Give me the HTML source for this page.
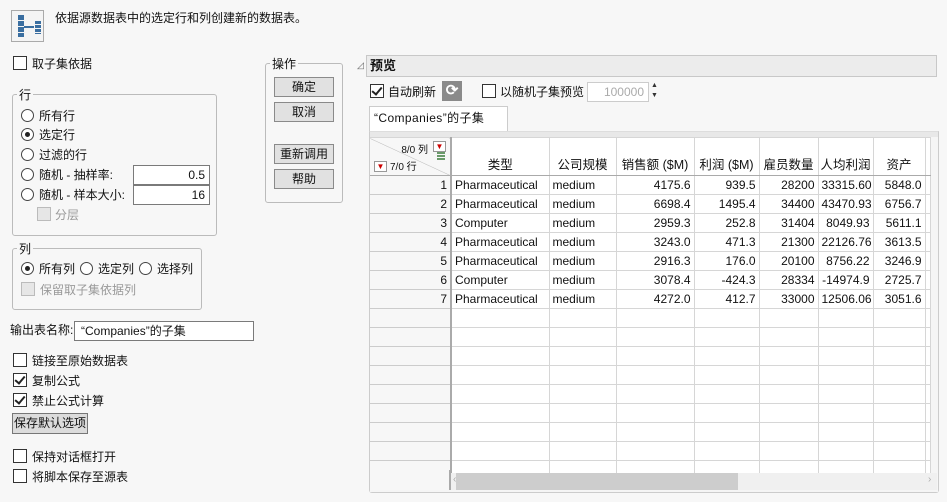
<!DOCTYPE html>
<html><head><meta charset="utf-8">
<style>
*{box-sizing:border-box;margin:0;padding:0}
body{width:947px;height:502px;background:#f7f7f7;font-family:"Liberation Sans","Noto Sans CJK SC",sans-serif;font-size:12px;color:#111;position:relative;overflow:hidden}
.a{position:absolute;white-space:nowrap}
.cb{position:absolute;width:14px;height:14px;border:1px solid #333;background:#fff}
.cb.on::after{content:"";position:absolute;left:3px;top:0px;width:4px;height:8px;border:solid #222;border-width:0 2px 2px 0;transform:rotate(40deg)}
.cb.dis{border-color:#bbb;background:#e6e6e6}
.rd{position:absolute;width:13px;height:13px;border:1px solid #444;border-radius:50%;background:#fff}
.rd.on::after{content:"";position:absolute;left:3px;top:3px;width:5px;height:5px;border-radius:50%;background:#222}
.grp{position:absolute;border:1px solid #bbb;border-radius:3px}
.lg{position:absolute;background:#f7f7f7;padding:0 2px;top:-9px;left:4px;font-size:12px}
.btn{position:absolute;width:60px;height:20px;border:1px solid #8a8a8a;background:#e1e1e1;text-align:center;line-height:18px}
.inp{position:absolute;border:1px solid #7a7a7a;background:#fff;height:20px;line-height:18px}
table{border-collapse:collapse;position:absolute;left:370px;top:137px;table-layout:fixed;width:560px;background:#fff}
td{height:19px;border:1px solid #d6d6d6;padding:0 3px;font-size:12px;overflow:hidden;white-space:nowrap}
td.r{text-align:right}
td.rh{background:#f7f7f7;border-right:2px solid #aaa;border-left:none;text-align:right;border-bottom:1px solid #ccc}
tr.h td{height:38px;vertical-align:bottom;text-align:center;padding:0 0 2px 0;border-bottom:1px solid #aaa;font-size:12.5px}
</style></head><body>
<div class="a" style="left:11px;top:10px;width:33px;height:32px;border:1px solid #aaa;background:#f4f4f4">
<div class="a" style="left:6px;top:4px;width:6px;height:22px;background:repeating-linear-gradient(#3a6ea0 0 5px,#f4f4f4 5px 6px)"></div>
<div class="a" style="left:12px;top:15px;width:10px;height:2px;background:#3a6ea0"></div>
<div class="a" style="left:23px;top:10px;width:6px;height:13px;background:repeating-linear-gradient(#3a6ea0 0 3px,#f4f4f4 3px 4px)"></div>
</div>
<div class="a" style="left:55px;top:9px">依据源数据表中的选定行和列创建新的数据表。</div>

<div class="cb" style="left:13px;top:56px"></div><div class="a" style="left:32px;top:55px">取子集依据</div>

<div class="grp" style="left:12px;top:94px;width:205px;height:142px"><span class="lg">行</span></div>
<div class="rd" style="left:21px;top:109px"></div><div class="a" style="left:39px;top:107px">所有行</div>
<div class="rd on" style="left:21px;top:128px"></div><div class="a" style="left:39px;top:126px">选定行</div>
<div class="rd" style="left:21px;top:148px"></div><div class="a" style="left:39px;top:146px">过滤的行</div>
<div class="rd" style="left:21px;top:168px"></div><div class="a" style="left:39px;top:166px">随机 - 抽样率:</div>
<div class="inp" style="left:133px;top:165px;width:77px;text-align:right;padding-right:4px">0.5</div>
<div class="rd" style="left:21px;top:188px"></div><div class="a" style="left:39px;top:186px">随机 - 样本大小:</div>
<div class="inp" style="left:133px;top:185px;width:77px;text-align:right;padding-right:4px">16</div>
<div class="cb dis" style="left:37px;top:207px"></div><div class="a" style="left:55px;top:206px;color:#999">分层</div>

<div class="grp" style="left:265px;top:63px;width:78px;height:140px"><span class="lg">操作</span></div>
<div class="btn" style="left:274px;top:77px">确定</div>
<div class="btn" style="left:274px;top:102px">取消</div>
<div class="btn" style="left:274px;top:144px">重新调用</div>
<div class="btn" style="left:274px;top:169px">帮助</div>

<div class="grp" style="left:12px;top:248px;width:190px;height:62px"><span class="lg">列</span></div>
<div class="rd on" style="left:21px;top:262px"></div><div class="a" style="left:39px;top:260px">所有列</div>
<div class="rd" style="left:80px;top:262px"></div><div class="a" style="left:98px;top:260px">选定列</div>
<div class="rd" style="left:139px;top:262px"></div><div class="a" style="left:157px;top:260px">选择列</div>
<div class="cb dis" style="left:21px;top:282px"></div><div class="a" style="left:40px;top:281px;color:#999">保留取子集依据列</div>

<div class="a" style="left:10px;top:321px">输出表名称:</div>
<div class="inp" style="left:74px;top:321px;width:180px;padding-left:6px">“Companies”的子集</div>

<div class="cb" style="left:13px;top:353px"></div><div class="a" style="left:32px;top:352px">链接至原始数据表</div>
<div class="cb on" style="left:13px;top:373px"></div><div class="a" style="left:32px;top:372px">复制公式</div>
<div class="cb on" style="left:13px;top:393px"></div><div class="a" style="left:32px;top:392px">禁止公式计算</div>
<div class="a" style="left:12px;top:413px;width:76px;height:21px;border:1px solid #777;background:#dcdcdc;line-height:19px;padding-left:1px">保存默认选项</div>
<div class="cb" style="left:13px;top:449px"></div><div class="a" style="left:32px;top:448px">保持对话框打开</div>
<div class="cb" style="left:13px;top:469px"></div><div class="a" style="left:32px;top:468px">将脚本保存至源表</div>

<div class="a" style="left:357px;top:60px;font-size:9px;color:#666">◿</div>
<div class="a" style="left:366px;top:55px;width:571px;height:22px;border:1px solid #c8c8c8;background:#ececec;font-weight:bold;font-size:13px;line-height:20px;padding-left:3px">预览</div>
<div class="cb on" style="left:370px;top:84px"></div><div class="a" style="left:388px;top:83px">自动刷新</div>
<div class="a" style="left:442px;top:81px;width:20px;height:20px;background:#8a8a8a;color:#fff;text-align:center;line-height:20px;font-size:15px;font-weight:bold">⟳</div>
<div class="cb" style="left:482px;top:84px"></div><div class="a" style="left:500px;top:83px">以随机子集预览</div>
<div class="inp" style="left:587px;top:82px;width:62px;border-color:#ccc;color:#aaa;text-align:right;padding-right:4px">100000</div>
<div class="a" style="left:651px;top:81px;font-size:7px;line-height:10px;color:#333">▲<br>▼</div>

<div class="a" style="left:369px;top:106px;width:139px;height:26px;border:1px solid #ccc;border-bottom:none;background:#fff;line-height:22px;padding-left:4px;letter-spacing:0.4px">“Companies”的子集</div>
<div class="a" style="left:369px;top:131px;width:570px;height:362px;border:1px solid #ccc;border-top:1px solid #ddd;border-radius:0 0 3px 3px;background:#f5f5f5"></div>
<div class="a" style="left:370px;top:132px;width:568px;height:5px;background:#e8e8e8"></div>

<table>
<colgroup><col style="width:81px"><col style="width:98px"><col style="width:67px"><col style="width:78px"><col style="width:65px"><col style="width:59px"><col style="width:55px"><col style="width:52px"><col style="width:5px"></colgroup>
<tr class="h"><td class="rh" style="position:relative;background:linear-gradient(to top right,#f7f7f7 49.5%,#bbb 50%,#f7f7f7 51%)">
<span class="a" style="right:22px;top:3px;font-size:10px">8/0 列</span>
<span class="a" style="right:4px;top:3px;width:13px;height:11px;border:1px solid #999;background:#fff;color:#c00;font-size:8px;line-height:9px;text-align:center">▼</span>
<span class="a" style="right:5px;top:14px;width:8px;height:9px;background:repeating-linear-gradient(#6a9a6a 0 2px,transparent 2px 3px)"></span>
<span class="a" style="left:4px;bottom:3px;width:13px;height:11px;border:1px solid #999;background:#fff;color:#c00;font-size:8px;line-height:9px;text-align:center">▼</span>
<span class="a" style="left:20px;bottom:2px;font-size:10px">7/0 行</span></td>
<td>类型</td><td>公司规模</td><td>销售额 ($M)</td><td>利润 ($M)</td><td>雇员数量</td><td>人均利润</td><td>资产</td><td></td></tr>
<tr><td class="rh">1</td><td>Pharmaceutical</td><td>medium</td><td class="r">4175.6</td><td class="r">939.5</td><td class="r">28200</td><td class="r">33315.60</td><td class="r">5848.0</td><td></td></tr>
<tr><td class="rh">2</td><td>Pharmaceutical</td><td>medium</td><td class="r">6698.4</td><td class="r">1495.4</td><td class="r">34400</td><td class="r">43470.93</td><td class="r">6756.7</td><td></td></tr>
<tr><td class="rh">3</td><td>Computer</td><td>medium</td><td class="r">2959.3</td><td class="r">252.8</td><td class="r">31404</td><td class="r">8049.93</td><td class="r">5611.1</td><td></td></tr>
<tr><td class="rh">4</td><td>Pharmaceutical</td><td>medium</td><td class="r">3243.0</td><td class="r">471.3</td><td class="r">21300</td><td class="r">22126.76</td><td class="r">3613.5</td><td></td></tr>
<tr><td class="rh">5</td><td>Pharmaceutical</td><td>medium</td><td class="r">2916.3</td><td class="r">176.0</td><td class="r">20100</td><td class="r">8756.22</td><td class="r">3246.9</td><td></td></tr>
<tr><td class="rh">6</td><td>Computer</td><td>medium</td><td class="r">3078.4</td><td class="r">-424.3</td><td class="r">28334</td><td class="r">-14974.9</td><td class="r">2725.7</td><td></td></tr>
<tr><td class="rh">7</td><td>Pharmaceutical</td><td>medium</td><td class="r">4272.0</td><td class="r">412.7</td><td class="r">33000</td><td class="r">12506.06</td><td class="r">3051.6</td><td></td></tr>
<tr><td class="rh"></td><td></td><td></td><td></td><td></td><td></td><td></td><td></td><td></td></tr>
<tr><td class="rh"></td><td></td><td></td><td></td><td></td><td></td><td></td><td></td><td></td></tr>
<tr><td class="rh"></td><td></td><td></td><td></td><td></td><td></td><td></td><td></td><td></td></tr>
<tr><td class="rh"></td><td></td><td></td><td></td><td></td><td></td><td></td><td></td><td></td></tr>
<tr><td class="rh"></td><td></td><td></td><td></td><td></td><td></td><td></td><td></td><td></td></tr>
<tr><td class="rh"></td><td></td><td></td><td></td><td></td><td></td><td></td><td></td><td></td></tr>
<tr><td class="rh"></td><td></td><td></td><td></td><td></td><td></td><td></td><td></td><td></td></tr>
<tr><td class="rh"></td><td></td><td></td><td></td><td></td><td></td><td></td><td></td><td></td></tr>
<tr><td class="rh"></td><td></td><td></td><td></td><td></td><td></td><td></td><td></td><td></td></tr>
</table>
<div class="a" style="left:370px;top:470px;width:81px;height:22px;background:#f7f7f7;border-right:2px solid #aaa"></div>
<div class="a" style="left:451px;top:473px;width:486px;height:17px;background:#f0f0f0"></div>
<div class="a" style="left:456px;top:473px;width:282px;height:17px;background:#cdcdcd"></div>
<div class="a" style="left:453px;top:474px;font-size:10px;color:#aaa">‹</div>
<div class="a" style="left:928px;top:474px;font-size:10px;color:#aaa">›</div>
<div class="a" style="left:370px;top:490px;width:568px;height:2px;background:#f5f5f5"></div>
</body></html>
